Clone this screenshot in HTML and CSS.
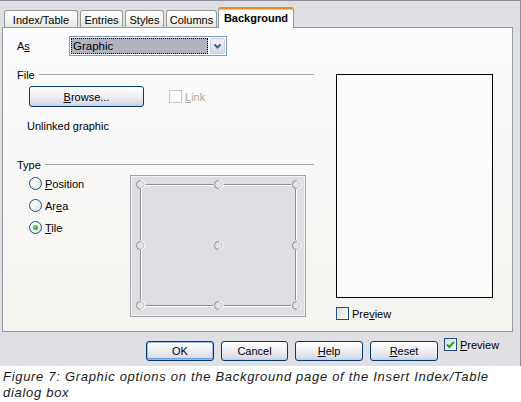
FILE: index.html
```html
<!DOCTYPE html>
<html>
<head>
<meta charset="utf-8">
<link rel="stylesheet" href="styles.css">
</head>
<body>
<div class="dialog">
  <div class="tabs">
    <div class="tab t1">Index/Table</div>
    <div class="tab t2">Entries</div>
    <div class="tab t3">Styles</div>
    <div class="tab t4">Columns</div>
    <div class="tab active">Background</div>
  </div>
  <div class="panel">
    <div class="left">
      <div class="as-row">
        <span class="as-label">A<u>s</u></span>
        <div class="select">
          <div class="sel-value">Graphic</div>
          <div class="sel-btn"><svg width="9" height="7" viewBox="0 0 9 7"><path d="M1.5 1.5 L4.5 4.5 L7.5 1.5" fill="none" stroke="#4d6185" stroke-width="2"/></svg></div>
        </div>
      </div>
      <div class="group-head"><span>File</span><span class="rule"></span></div>
      <div class="file-row">
        <button class="btn browse"><u>B</u>rowse...</button>
        <div class="check disabled"><span class="box"></span><span><u>L</u>ink</span></div>
      </div>
      <div class="unlinked">Unlinked graphic</div>
      <div class="group-head type-head"><span>Type</span><span class="rule"></span></div>
      <div class="type-row">
        <div class="radios">
          <div class="radio"><span class="circle"></span><span><u>P</u>osition</span></div>
          <div class="radio"><span class="circle"></span><span>Ar<u>e</u>a</span></div>
          <div class="radio on"><span class="circle"><span class="dot"></span></span><span><u>T</u>ile</span></div>
        </div>
        <div class="posgrid">
          <svg width="174" height="140" viewBox="0 0 174 140">
            <defs>
              <g id="pt">
                <circle cx="0" cy="0" r="4" fill="#e4e4e8" stroke="#8e8e92" stroke-width="1"/>
                <path d="M0.5 -4 A4 4 0 0 1 0.5 4" fill="none" stroke="#ffffff" stroke-width="1.2"/>
              </g>
            </defs>
            <g stroke-width="1" fill="none">
              <path d="M14 8.5 H82 M92 8.5 H160 M14 129.5 H82 M92 129.5 H160" stroke="#8e8e92"/>
              <path d="M14 9.5 H82 M92 9.5 H160 M14 130.5 H82 M92 130.5 H160" stroke="#ffffff"/>
              <path d="M9.5 13 V64 M9.5 74 V124 M164.5 13 V64 M164.5 74 V124" stroke="#8e8e92"/>
              <path d="M10.5 13 V64 M10.5 74 V124 M165.5 13 V64 M165.5 74 V124" stroke="#ffffff"/>
            </g>
            <use href="#pt" x="9.5" y="8.5"/>
            <use href="#pt" x="87.5" y="8.5"/>
            <use href="#pt" x="165.5" y="8.5"/>
            <use href="#pt" x="9.5" y="69.5"/>
            <use href="#pt" x="87.5" y="69.5"/>
            <use href="#pt" x="165.5" y="69.5"/>
            <use href="#pt" x="9.5" y="129.5"/>
            <use href="#pt" x="87.5" y="129.5"/>
            <use href="#pt" x="165.5" y="129.5"/>
          </svg>
        </div>
      </div>
    </div>
    <div class="right">
      <div class="preview"></div>
      <div class="check"><span class="box"></span><span>Pre<u>v</u>iew</span></div>
    </div>
  </div>
  <div class="buttons">
    <button class="btn default w68">OK</button>
    <button class="btn w67">Cancel</button>
    <button class="btn w68"><u>H</u>elp</button>
    <button class="btn w68"><u>R</u>eset</button>
    <div class="check bottom-check"><span class="box checked"><svg width="11" height="11" viewBox="0 0 11 11"><path d="M2 5.5 L4.3 8 L9 2.8" fill="none" stroke="#21a121" stroke-width="2"/></svg></span><span><u>P</u>review</span></div>
  </div>
</div>
<div class="caption">Figure 7: Graphic options on the Background page of the Insert Index/Table<br>dialog box</div>
</body>
</html>
```

FILE: styles.css
```css
body {
  margin: 0;
  background: #ffffff;
  font-family: "Liberation Sans", Arial, sans-serif;
  font-size: 11px;
  color: #000;
}

.dialog {
  width: 521px;
  height: 366px;
  box-sizing: border-box;
  background: #e0dfe3;
  border-top: 1px solid #8d8d9b;
  border-right: 1px solid #8d8d9b;
}

.tabs {
  display: flex;
  align-items: flex-end;
  height: 26px;
  padding-left: 4px;
  gap: 2px;
}

.tab {
  height: 17px;
  box-sizing: border-box;
  border: 1px solid #919b9c;
  border-bottom: none;
  border-radius: 3px 3px 0 0;
  background: linear-gradient(#ffffff, #f3f3ef 60%, #e4e3dd);
  display: flex;
  align-items: center;
  justify-content: center;
  padding-top: 1px;
  white-space: nowrap;
}

.t1 { width: 74px; }
.t2 { width: 43px; }
.t3 { width: 39px; }
.t4 { width: 51px; }

.tab.active {
  width: 76px;
  height: 21px;
  margin-left: -1px;
  margin-bottom: -1px;
  border-top: 2px solid #e68b2c;
  background: #fcfcfe;
  box-shadow: inset 0 1px 0 #ffc73c;
  font-weight: bold;
  padding-top: 0;
  padding-bottom: 2px;
  position: relative;
  z-index: 1;
}

.panel {
  margin-left: 2px;
  width: 511px;
  height: 305px;
  box-sizing: border-box;
  border: 1px solid #919b9c;
  background: linear-gradient(#fcfcfe, #f4f3ee);
  display: grid;
  grid-template-columns: 311px 1fr;
}

.left {
  padding: 8px 0 0 14px;
}

.as-row {
  display: flex;
  align-items: center;
  height: 20px;
}

.as-label {
  width: 52px;
}

.select {
  width: 158px;
  height: 20px;
  box-sizing: border-box;
  border: 1px solid #7f9db9;
  background: #ffffff;
  padding: 1px;
  display: flex;
  gap: 2px;
}

.sel-value {
  flex: 1;
  background: #b1b3be;
  border: 1px dotted #000;
  padding-left: 1px;
  display: flex;
  align-items: center;
  font-size: 11.5px;
}

.sel-btn {
  width: 15px;
  box-sizing: border-box;
  border: 1px solid #c4cde6;
  border-radius: 2px;
  background: linear-gradient(#f2f4fa, #d4d9ea);
  display: flex;
  align-items: center;
  justify-content: center;
}

.group-head {
  display: flex;
  align-items: center;
  height: 13px;
  margin-top: 12px;
  gap: 4px;
}

.rule {
  flex: 1;
  height: 1px;
  background: #a7a6ab;
}

.type-head {
  margin-top: 25px;
}

.file-row {
  display: flex;
  align-items: center;
  margin-top: 5px;
  padding-left: 12px;
}

.btn {
  height: 20px;
  box-sizing: border-box;
  border: 1px solid #003c74;
  border-radius: 3px;
  background: linear-gradient(#ffffff, #f1f1f5 45%, #dcdde8 85%, #c9cbdc);
  font-family: "Liberation Sans", Arial, sans-serif;
  font-size: 11px;
  color: #000;
  padding: 0;
}

.browse {
  width: 115px;
  height: 21px;
  margin-right: 25px;
}

.check {
  display: flex;
  align-items: center;
  gap: 3px;
}

.box {
  width: 13px;
  height: 13px;
  box-sizing: border-box;
  border: 1px solid #1c5180;
  background: linear-gradient(135deg, #dcdcd7, #ffffff);
  display: flex;
  align-items: center;
  justify-content: center;
}

.disabled {
  color: #aca899;
}

.disabled .box {
  border-color: #cac8bb;
  background: #fcfcfc;
}

.unlinked {
  margin-top: 12px;
  padding-left: 10px;
  line-height: 14px;
}

.type-row {
  display: flex;
  align-items: flex-start;
  margin-top: 4px;
}

.radios {
  width: 101px;
  padding-left: 12px;
  padding-top: 2px;
  display: flex;
  flex-direction: column;
  gap: 9px;
}

.radio {
  display: flex;
  align-items: center;
  gap: 3px;
  height: 13px;
}

.circle {
  width: 13px;
  height: 13px;
  box-sizing: border-box;
  border: 1px solid #1c5180;
  border-radius: 50%;
  background: linear-gradient(135deg, #ffffff 20%, #dcdcd7);
  display: flex;
  align-items: center;
  justify-content: center;
}

.dot {
  width: 5px;
  height: 5px;
  border-radius: 50%;
  background: radial-gradient(circle at 40% 40%, #5fd45f, #21a121);
}

.posgrid {
  width: 176px;
  height: 142px;
  box-sizing: border-box;
  border: 1px solid #a3a3a8;
  background: #dedee3;
  box-shadow: inset 0 0 0 1px #f3f3f5;
  display: flex;
}

.right {
  padding: 46px 0 0 22px;
}

.preview {
  width: 157px;
  height: 224px;
  box-sizing: border-box;
  border: 1px solid #000;
  background: #fcfcfc;
}

.right .check {
  margin-top: 9px;
}

.buttons {
  display: flex;
  align-items: flex-start;
  gap: 7px;
  margin-top: 9px;
  padding-left: 146px;
}

.w67 { width: 67px; }
.w68 { width: 68px; }

.btn.default {
  box-shadow: inset 0 0 0 1px #9db7ee, inset 0 -1px 0 1px #7a9de0;
}

.bottom-check {
  margin-top: -3px;
  margin-left: -1px;
}

.box.checked {
  background: linear-gradient(135deg, #dcdcd7, #ffffff);
}

.caption {
  padding: 3px 0 0 3px;
  font-style: italic;
  font-size: 13px;
  letter-spacing: 0.7px;
  line-height: 16px;
  color: #1a1a1a;
}
```
